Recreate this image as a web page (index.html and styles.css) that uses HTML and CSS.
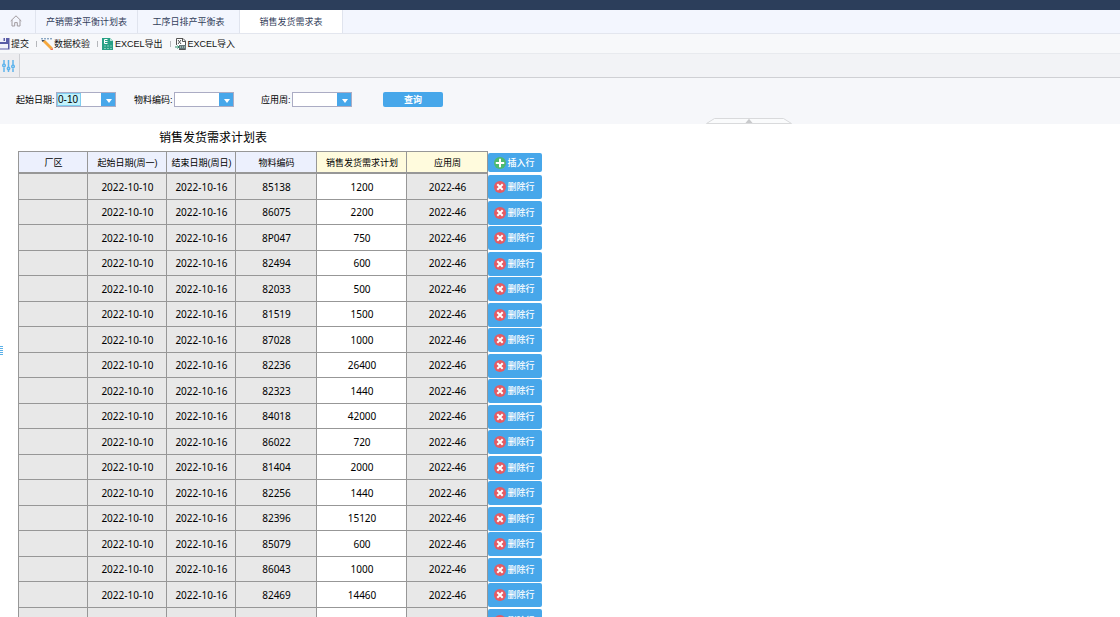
FILE: index.html
```html
<!DOCTYPE html>
<html lang="zh-CN">
<head>
<meta charset="utf-8">
<title>销售发货需求表</title>
<link rel="stylesheet" href="styles.css">
</head>
<body>
<svg class="defs" aria-hidden="true">
  <symbol id="i-add" viewBox="0 0 12 12"><circle cx="6" cy="6" r="6" fill="#4dba6f"/><path d="M6 1.800v8.400M1.800 6h8.400" stroke="#fff" stroke-width="2"/></symbol>
  <symbol id="i-del" viewBox="0 0 12 12"><circle cx="6" cy="6" r="6" fill="#e45b64"/><path d="M3.300 3.300l5.400 5.400M8.700 3.300l-5.400 5.400" stroke="#fff" stroke-width="2"/></symbol>
</svg>
<div class="app">
  <header class="topbar"></header>
  <nav class="tabs">
    <a class="tab home" href="#" aria-label="首页"><svg width="12" height="12" viewBox="0 0 12 12" fill="none" stroke="#a09a9e"><path d="M.7 6L6 .8 11.300 6M2 5v6h2.700V7.600h2.600V11H10V5"/></svg></a>
    <a class="tab" href="#">产销需求平衡计划表</a>
    <a class="tab" href="#">工序日排产平衡表</a>
    <a class="tab active" href="#">销售发货需求表</a>
  </nav>
  <div class="toolbar">
    <button class="tool" type="button"><svg width="10" height="12" viewBox="0 0 10 12"><path d="M0 0h9.500v11.500H0z" fill="#5a5da6"/><path d="M0 0h6v4H0zM0 6h8v4.500H0z" fill="#f3f3fa"/><path d="M3.500 0H5v3H3.500z" fill="#5a5da6"/></svg>提交</button>
    <button class="tool" type="button"><svg width="12" height="12" viewBox="0 0 12 12"><path d="M0 .8h11" stroke="#5e87ad" stroke-dasharray="2 1"/><path d="M1.500 3.500L4 2l7.500 7.500-2 2z" fill="#f6a83c"/><path d="M.5 2l3.500 0-2.500 2z" fill="#3f4c5c"/><path d="M9 12l2.500-2.500.5 2.500z" fill="#ef6b4b"/></svg>数据校验</button>
    <button class="tool" type="button"><svg width="12" height="12" viewBox="0 0 12 12"><path d="M0 0h8l3 3v9H0z" fill="#27a085"/><path d="M8 0v3h3z" fill="#b6e2d6"/><path d="M5.500 1.500H2.500v4h3M2.500 3.500h3" stroke="#fff" fill="none"/><path d="M2 8h8M2 10.500h8" stroke="#7cc9b6" stroke-dasharray="2 1"/></svg>EXCEL导出</button>
    <button class="tool" type="button"><svg width="12" height="12" viewBox="0 0 12 12"><path d="M1.500 7V.5H8l2.500 2.500v8.500H4" fill="#fff" stroke="#555"/><path d="M3 2l3 4M6 2L3 6M7.500 1v2.500H10" stroke="#555" fill="none"/><path d="M4 7h7v4H4z" fill="#66767a"/><path d="M5 9h5" stroke="#c6e5d9" stroke-dasharray="1 1"/><path d="M0 9h4M2.500 7.500L4 9l-1.500 1.500" stroke="#2a8b68" fill="none"/></svg>EXCEL导入</button>
  </div>
  <div class="param-bar">
    <button class="param-toggle" type="button" aria-label="参数"><svg width="13" height="12" viewBox="0 0 13 12" fill="none" stroke="#5fb4ec" stroke-width="1.500"><path d="M2 0v4M2 7.500V12M6.500 0v7M6.500 10v2M11 0v5M11 8.500V12"/><circle cx="2" cy="5.500" r="1.300"/><circle cx="6.500" cy="8.500" r="1.200"/><circle cx="11" cy="6.500" r="1.300"/></svg></button>
  </div>
  <form class="filters">
    <div class="field">
      <label for="start">起始日期:</label>
      <span class="combo"><input id="start" type="text" value="0-10"></span>
    </div>
    <div class="field">
      <label for="material">物料编码:</label>
      <span class="combo"><select id="material"><option></option></select></span>
    </div>
    <div class="field week">
      <label for="week">应用周:</label>
      <span class="combo"><select id="week"><option></option></select></span>
    </div>
    <button class="query" type="button">查询</button>
    <button class="fold" type="button" aria-label="收起"><svg width="86" height="6" viewBox="0 0 86 6"><path d="M.5 5.500L8.500.5h69l8 5z" fill="#fafbfc" stroke="#d9dadc"/><path d="M39.500 5h7L43 .8z" fill="#c9cacc"/></svg></button>
  </form>
  <main class="report">
    <button class="side-handle" type="button" aria-label="展开"></button>
    <table class="plan">
      <caption>销售发货需求计划表</caption>
      <colgroup><col class="c-area"><col class="c-start"><col class="c-end"><col class="c-code"><col class="c-plan"><col class="c-week"><col class="c-act"></colgroup>
      <thead>
        <tr><th>厂区</th><th>起始日期(周一)</th><th>结束日期(周日)</th><th>物料编码</th><th class="key">销售发货需求计划</th><th class="key">应用周</th><td class="act"><button class="row-btn" type="button"><svg width="12" height="12"><use href="#i-add"/></svg>插入行</button></td></tr>
      </thead>
      <tbody id="rows"></tbody>
    </table>
  </main>
</div>
<script src="rows.js"></script>
</body>
</html>
```
FILE: styles.css
```css
* { box-sizing: border-box; }
body {
  margin: 0;
  background: #fff;
  color: #111;
  font-family: "Liberation Sans", "Noto Sans CJK SC", sans-serif;
  font-size: 9px;
  line-height: 12px;
}
button, input, select {
  margin: 0;
  padding: 0;
  border: 0;
  border-radius: 0;
  background: none;
  color: inherit;
  font: inherit;
}
button { cursor: pointer; }
svg { display: block; flex: none; }
.defs { position: absolute; width: 0; height: 0; }
.app { display: flex; flex-direction: column; height: 100vh; overflow: hidden; }
.topbar { flex: none; height: 10px; background: #2c3e5b; }

.tabs { display: flex; flex: none; height: 24px; background: #f3f6fe; border-bottom: 1px solid #e3e6ee; }
.tab {
  display: flex;
  align-items: center;
  justify-content: center;
  width: 102px;
  border-right: 1px solid #e0e4ee;
  color: #34415c;
  text-decoration: none;
}
.tab.home { width: 36px; padding: 0 4px 2px 0; }
.tab.active { width: 103px; background: #fff; }

.toolbar { display: flex; flex: none; align-items: center; height: 20px; background: #f7f8fa; border-bottom: 1px solid #e8eaee; }
.tool { display: flex; align-items: center; gap: 1px; white-space: nowrap; }
.tool + .tool { margin-left: 7px; }
.tool + .tool::before { content: ""; width: 1px; height: 6px; margin-right: 3px; background: #b5b7bb; }

.param-bar { display: flex; flex: none; height: 24px; background: #f2f3f6; border-bottom: 1px solid #cfd0d4; }
.param-toggle { display: flex; align-items: center; width: 20px; padding-left: 2px; background: #ededf0; border-right: 1px solid #cfd0d4; }

.filters { position: relative; display: flex; flex: none; align-items: flex-start; height: 46px; padding: 14px 16px 0; background: #f6f7fa; }
.field { display: flex; align-items: center; margin-right: 18px; color: #000; }
.field label { width: 40px; white-space: nowrap; }
.field.week { margin: 0 31px 0 9px; }
.field.week label { width: 31px; }
.combo { position: relative; display: flex; width: 60px; height: 15px; border: 1px solid #abacc4; background: #fff; }
.combo::before { content: ""; position: absolute; top: 0; right: 0; bottom: 0; width: 14px; background: #47a7ea; pointer-events: none; }
.combo::after {
  content: "";
  position: absolute;
  top: 6px;
  right: 3px;
  border: 3px solid transparent;
  border-top: 4px solid #fff;
  border-bottom: 0;
  pointer-events: none;
}
.combo select { width: 100%; appearance: none; outline: 0; }
.combo input { width: 24px; border: 1px solid #7fcdf0; background: #c3f3fb; font-size: 10px; outline: 0; }
.query { width: 60px; height: 15px; border-radius: 2px; background: #47a7ea; color: #fff; font-weight: bold; }
.fold { position: absolute; left: 63%; bottom: 0; }

.report { position: relative; flex: 1; min-height: 0; overflow: hidden; padding: 0 18px; }
.side-handle {
  position: absolute;
  left: 0;
  top: 45%;
  width: 3px;
  height: 9px;
  background: repeating-linear-gradient(#5bb0e8 0 1px, #fff 1px 2px);
}
.plan { width: 525px; table-layout: fixed; border-collapse: separate; border-spacing: 0; }
.plan caption { width: 390px; height: 27px; padding-top: 2px; color: #000; font-size: 12px; line-height: 25px; }
.c-area { width: 70px; }
.c-start { width: 79px; }
.c-end { width: 69px; }
.c-code, .c-week { width: 81px; }
.c-plan { width: 90px; }
.c-act { width: 55px; }
.plan th, .plan td { padding: 0; border-right: 1px solid #979797; border-bottom: 1px solid #979797; text-align: center; white-space: nowrap; }
.plan th { height: 23px; padding: 2px 0 0 1px; border-top: 1px solid #979797; border-bottom-width: 2px; background: #ecf0fd; color: #000; font-weight: normal; }
.plan th.key { background: #fffbdd; }
.plan th:first-child, .plan td:first-child { border-left: 1px solid #979797; }
.plan td { padding-left: 1px; background: #e8e8e8; color: #000; font-family: "Noto Sans", "Noto Sans CJK SC", sans-serif; font-size: 10px; }
.plan tbody tr { height: 25px; }
.plan tbody tr:nth-child(odd) { height: 26px; }
.plan td.qty { background: #fff; }
.plan td.act { padding: 0; border: 0; background: none; font-size: 9px; }
.row-btn {
  display: flex;
  align-items: center;
  justify-content: center;
  gap: 1px;
  width: 54px;
  height: 24px;
  padding-right: 1px;
  border-radius: 2px;
  background: #47a7ea;
  color: #fff;
  font-family: "Noto Sans CJK SC", sans-serif;
  font-weight: 500;
}
thead .row-btn { height: 19px; }
```
FILE: rows.js
```js
const rows = [
  ["85138", "1200"], ["86075", "2200"], ["8P047", "750"], ["82494", "600"],
  ["82033", "500"], ["81519", "1500"], ["87028", "1000"], ["82236", "26400"],
  ["82323", "1440"], ["84018", "42000"], ["86022", "720"], ["81404", "2000"],
  ["82256", "1440"], ["82396", "15120"], ["85079", "600"], ["86043", "1000"],
  ["82469", "14460"], ["", ""]
];

document.getElementById("rows").innerHTML = rows.map(([code, qty]) => `
  <tr>
    <td></td>
    <td>${code && "2022-10-10"}</td>
    <td>${code && "2022-10-16"}</td>
    <td>${code}</td>
    <td class="qty">${qty}</td>
    <td>${code && "2022-46"}</td>
    <td class="act"><button class="row-btn" type="button"><svg width="12" height="12"><use href="#i-del"/></svg>删除行</button></td>
  </tr>`).join("");
```
